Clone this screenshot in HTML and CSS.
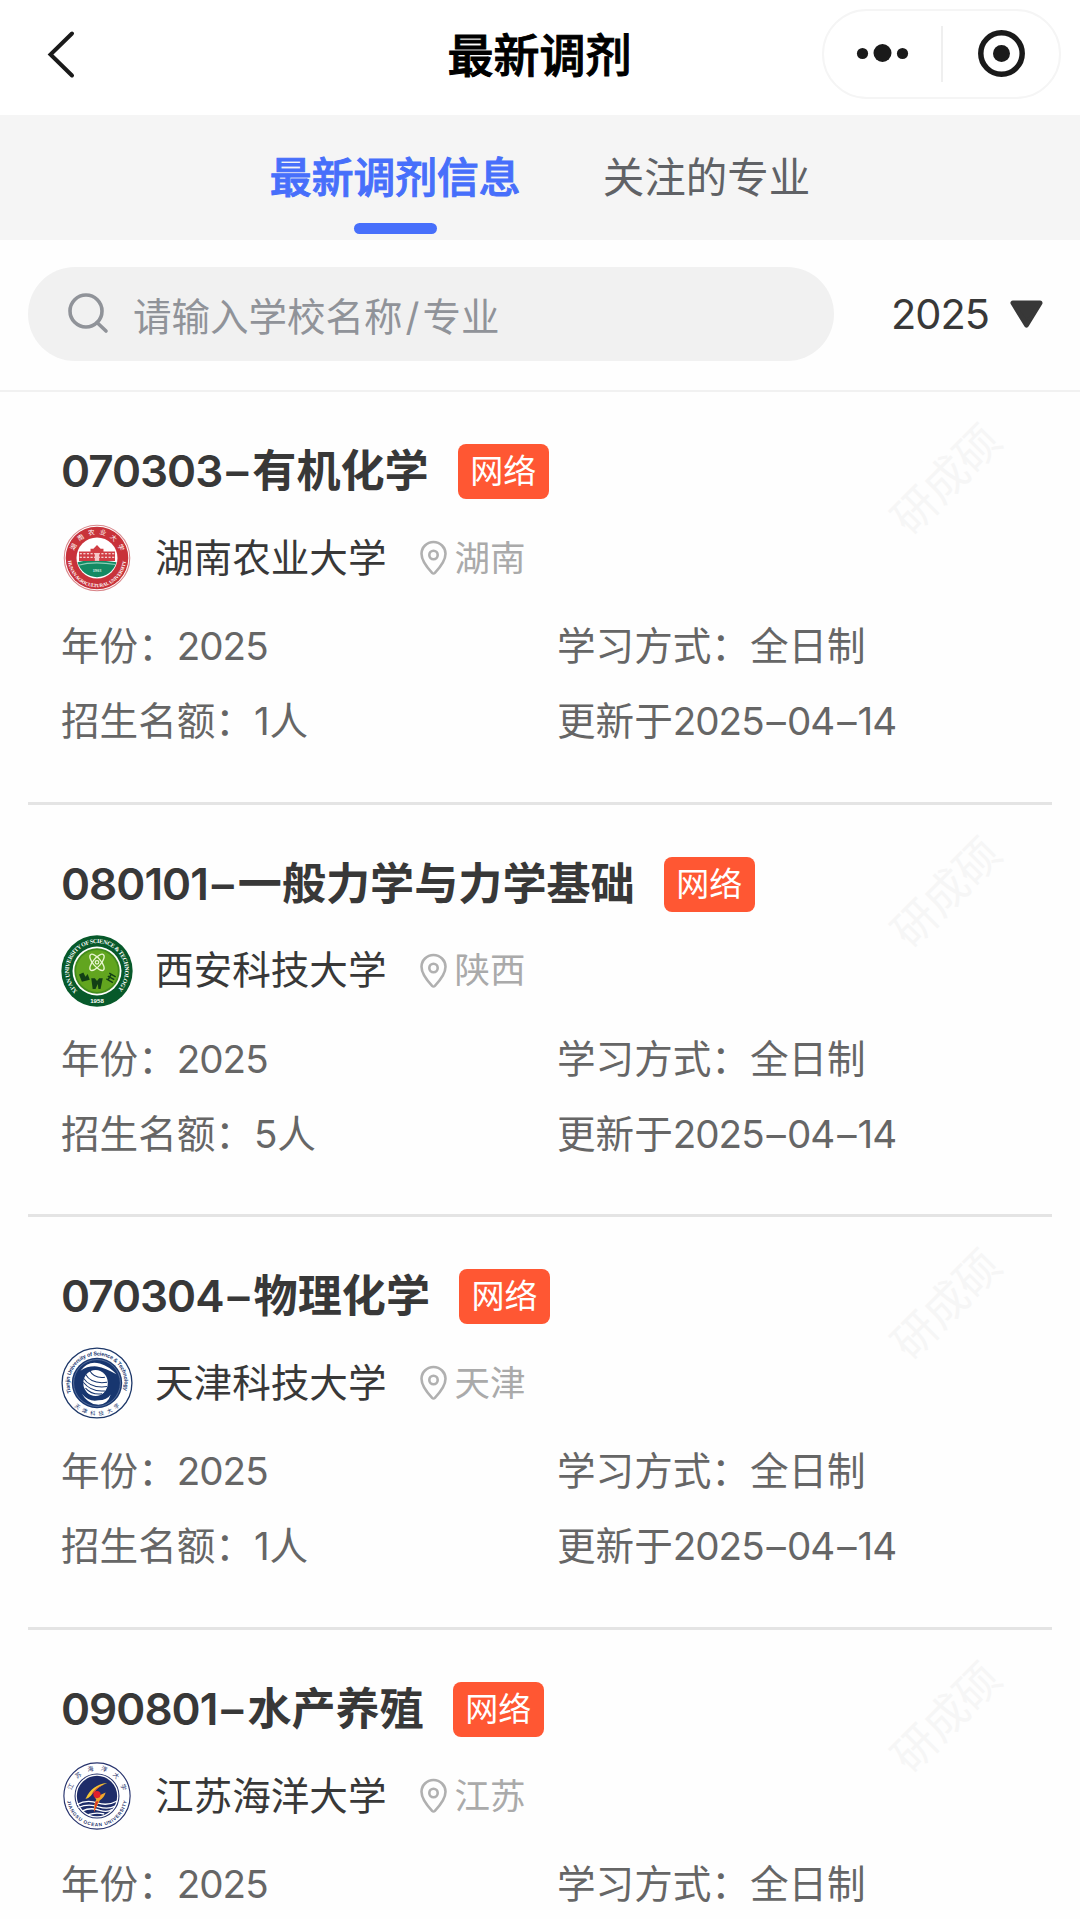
FILE: index.html
```html
<!DOCTYPE html>
<html lang="zh-CN">
<head>
	<meta charset="UTF-8">
	<title>最新调剂</title>
	<link rel="stylesheet" href="styles.css">
</head>
<body>
	<svg width="0" height="0" class="defs">
		<symbol id="pin" viewBox="0 0 28 36">
			<path d="M14 2C7.300 2 2 7.300 2 13.800C2 21 8.500 28.500 12.600 32.800Q14 34.200 15.400 32.800C19.500 28.500 26 21 26 13.800C26 7.300 20.700 2 14 2Z"/>
			<circle cx="14" cy="15" r="4.200"/>
		</symbol>
	</svg>
	<div id="header">
		<svg class="back" width="30" height="50" viewBox="0 0 30 50"><path d="M26 4.500L4.500 25.500L26 46.500"/></svg>
		<h1>最新调剂</h1>
		<div class="capsule">
			<svg width="118" height="86" viewBox="0 0 118 86">
				<circle cx="38.500" cy="42.500" r="5.600"/>
				<circle cx="58.500" cy="42" r="9"/>
				<circle cx="78.500" cy="42.500" r="5.600"/>
			</svg>
			<i></i>
			<svg width="117" height="86" viewBox="0 0 117 86">
				<circle class="ring" cx="59.500" cy="42.500" r="20.700"/>
				<circle cx="59.500" cy="42.500" r="8.500"/>
			</svg>
		</div>
	</div>
	<div id="tabs">
		<span class="tab active">最新调剂信息</span>
		<span class="tab">关注的专业</span>
	</div>
	<div id="search">
		<div class="box">
			<svg width="42" height="42" viewBox="0 0 42 42"><circle cx="19" cy="18" r="16"/><path d="M30 29.500L39 38"/></svg>
			<span>请输入学校名称<b>/</b>专业</span>
		</div>
		<div class="year">
			<span class="n">2025</span>
			<svg width="33" height="28" viewBox="0 0 33 28"><path d="M3 3H30L16.500 25Z"/></svg>
		</div>
	</div>
	<ul id="list">
		<li>
			<div class="title"><h2><span class="n">070303<i>–</i></span>有机化学</h2><span class="tag">网络</span></div>
			<div class="school">
				<svg class="logo" viewBox="0 0 100 100">
					<circle cx="50" cy="50" r="45.500" fill="#fff" stroke="#d9868a" stroke-width="1.500"/>
					<circle cx="50" cy="50" r="43.500" fill="#c8323a"/>
					<circle cx="50" cy="50" r="28.500" fill="#fff"/>
					<path d="M23 56Q40 50 77 56A28 28 0 0 1 23 56Z" fill="#138a63"/>
					<path d="M25 41H41V37H45L50 32L55 37H59V41H75V54H25Z" fill="#d13d44"/>
					<path d="M26 44H74M26 49H74" stroke="#fff" stroke-width="1.500" stroke-dasharray="3 2"/>
					<path d="M47 43H53V54H47Z" fill="#f5c9c9"/>
					<path d="M24 60Q45 54 76 59" stroke="#8ed0b8" stroke-width="1.500" fill="none"/>
					<path id="t1" d="M17 50A33 33 0 0 1 83 50" fill="none"/>
					<path id="b1" d="M9.500 50A40.500 40.500 0 0 0 90.500 50" fill="none"/>
					<text class="kai" font-size="9" fill="#fff" text-anchor="middle" letter-spacing="6"><textPath href="#t1" startOffset="53%">湖南农业大学</textPath></text>
					<text class="en" font-size="6.800" fill="#fff"><textPath href="#b1" startOffset="4" textLength="119">HUNAN AGRICULTURAL UNIVERSITY</textPath></text>
					<text class="en" font-size="6" fill="#d7efe5" x="50" y="69" text-anchor="middle">1903</text>
				</svg>
				<span class="name">湖南农业大学</span>
				<svg class="pin"><use href="#pin"/></svg><span class="city">湖南</span>
			</div>
			<div class="info"><span>年份：<span class="n">2025</span></span><span>学习方式：全日制</span><span>招生名额：1人</span><span>更新于<span class="n">2025<i>–</i>04<i>–</i>14</span></span></div>
			<div class="mark">研成硕</div>
		</li>
		<li>
			<div class="title"><h2><span class="n">080101<i>–</i></span>一般力学与力学基础</h2><span class="tag">网络</span></div>
			<div class="school">
				<svg class="logo" viewBox="0 0 100 100">
					<circle cx="50" cy="50" r="49.500" fill="#07592a"/>
					<circle cx="50" cy="50" r="34" fill="#fff"/>
					<circle cx="50" cy="50" r="31.500" fill="#438c1c"/>
					<circle cx="50" cy="50" r="29" fill="#62a51f"/>
					<g fill="none" stroke="#e8f5d0" stroke-width="1.800">
						<ellipse cx="50" cy="38" rx="14" ry="5.500" transform="rotate(50 50 38)"/>
						<ellipse cx="50" cy="38" rx="14" ry="5.500" transform="rotate(-50 50 38)"/>
						<circle cx="50" cy="38" r="2.500"/>
					</g>
					<path d="M25 55L31 52L34 58L37 54L40 62L29 65ZM42 60H47L50 64L53 60H58L55 75H52L51 68L48 75H44Z" fill="#123f15"/>
					<path d="M63 61L72 66M65 57L74 62M67 53L76 58M65 63L70 54" stroke="#123f15" stroke-width="2"/>
					<path id="t2" d="M23.100 77.900A38.800 38.800 0 1 1 76.900 77.900" fill="none"/>
					<text class="en" font-size="8.300" fill="#fff"><textPath href="#t2" textLength="181">XI'AN UNIVERSITY OF SCIENCE &amp; TECHNOLOGY</textPath></text>
					<text class="num" font-size="8.500" fill="#fff" x="50" y="95" text-anchor="middle">1958</text>
				</svg>
				<span class="name">西安科技大学</span>
				<svg class="pin"><use href="#pin"/></svg><span class="city">陕西</span>
			</div>
			<div class="info"><span>年份：<span class="n">2025</span></span><span>学习方式：全日制</span><span>招生名额：5人</span><span>更新于<span class="n">2025<i>–</i>04<i>–</i>14</span></span></div>
			<div class="mark">研成硕</div>
		</li>
		<li>
			<div class="title"><h2><span class="n">070304<i>–</i></span>物理化学</h2><span class="tag">网络</span></div>
			<div class="school">
				<svg class="logo" viewBox="0 0 100 100">
					<circle cx="50" cy="50" r="48.500" fill="#fff" stroke="#1e3869" stroke-width="1.800"/>
					<circle cx="50" cy="50" r="35" fill="#17366f"/>
					<circle cx="50" cy="50" r="32.500" fill="none" stroke="#6c83ac" stroke-width="1"/>
					<ellipse cx="48" cy="50" rx="17" ry="18" fill="#fff"/>
					<g fill="none" stroke="#17366f" stroke-width="1.400">
						<path d="M34 38Q42 52 64 49M31 43Q41 58 64 55M31 49Q42 63 61 61M34 57Q43 67 57 65M40 33Q46 44 61 42"/>
					</g>
					<path d="M27 33Q38 18 54 23Q67 27 77 38Q62 29 50 27Q37 26 27 33ZM29 65Q39 77 52 74Q64 74 69 66Q65 81 50 80Q37 79 29 65Z" fill="#fff"/>
					<path id="t3" d="M14.300 63.500A38.200 38.200 0 1 1 85.700 63.500" fill="none"/>
					<path id="b3" d="M5 50A45 45 0 0 0 95 50" fill="none"/>
					<text class="hv" font-size="7.600" fill="#17366f"><textPath href="#t3" textLength="144">Tianjin University of Science &amp; Technology</textPath></text>
					<text class="kai" font-size="7.500" fill="#17366f" text-anchor="middle" letter-spacing="5"><textPath href="#b3" startOffset="52%">天津科技大学</textPath></text>
				</svg>
				<span class="name">天津科技大学</span>
				<svg class="pin"><use href="#pin"/></svg><span class="city">天津</span>
			</div>
			<div class="info"><span>年份：<span class="n">2025</span></span><span>学习方式：全日制</span><span>招生名额：1人</span><span>更新于<span class="n">2025<i>–</i>04<i>–</i>14</span></span></div>
			<div class="mark">研成硕</div>
		</li>
		<li>
			<div class="title"><h2><span class="n">090801<i>–</i></span>水产养殖</h2><span class="tag">网络</span></div>
			<div class="school">
				<svg class="logo" viewBox="0 0 100 100">
					<circle cx="50" cy="50" r="46" fill="#fff" stroke="#27336d" stroke-width="1.600"/>
					<circle cx="50" cy="50" r="30.500" fill="#fff" stroke="#27336d" stroke-width="1.500"/>
					<circle cx="50" cy="50" r="28" fill="#1e2c69"/>
					<path d="M22 62Q36 54 51 60Q66 64 78 57M24 66Q38 60 52 65Q66 69 75 64M29 71Q42 65 54 70Q64 73 71 69M38 76Q48 72 60 75" fill="none" stroke="#fff" stroke-width="1.800"/>
					<path d="M64 32Q43 34 34 54Q42 52 45 44Q50 38 64 32Z" fill="#f4c633"/>
					<path d="M60 34Q46 38 42 48L47 44Q50 39 60 34Z" fill="#e8622d"/>
					<path d="M47 52L62 45Q60 52 54 56L46 72Q45 62 49 55Z" fill="#f0a52c"/>
					<path d="M48 58L52 57L46 73Z" fill="#dc3327"/>
					<circle cx="50" cy="48" r="5" fill="#e1202b"/>
					<path id="t4" d="M14.500 50A35.500 35.500 0 0 1 85.500 50" fill="none"/>
					<path id="b4" d="M8 50A42 42 0 0 0 92 50" fill="none"/>
					<text class="kai" font-size="8.500" fill="#27336d" text-anchor="middle" letter-spacing="9"><textPath href="#t4" startOffset="54%">江苏海洋大学</textPath></text>
					<text class="hv" font-size="6.500" fill="#27336d"><textPath href="#b4" startOffset="7" textLength="118">JIANGSU OCEAN UNIVERSITY</textPath></text>
				</svg>
				<span class="name">江苏海洋大学</span>
				<svg class="pin"><use href="#pin"/></svg><span class="city">江苏</span>
			</div>
			<div class="info"><span>年份：<span class="n">2025</span></span><span>学习方式：全日制</span></div>
			<div class="mark">研成硕</div>
		</li>
	</ul>
</body>
</html>
```
FILE: styles.css
```css
*{
	margin: 0;
	padding: 0;
	box-sizing: border-box;
}
body{
	width: 1080px;
	height: 1919px;
	overflow: hidden;
	background: #fefefe;
	font-family: Inter, "Noto Sans CJK SC", sans-serif;
	color: #383838;
}
ul{
	list-style-type: none;
}
svg{
	flex-shrink: 0;
}
.defs{
	display: block;
	height: 0;
}
/* 数字稍微收紧，横线两边留一点空 */
.n{
	letter-spacing: -1px;
}
.n i{
	font-style: normal;
	margin: 0 2px 0 3px;
}
#header{
	height: 115px;
	display: grid;
	grid-template-columns: 1fr auto 1fr;
	align-items: center;
	padding: 0 19px 8px 46px;
	background: #fff;
}
#header h1{
	font-size: 46px;
	font-weight: 500;
	line-height: 60px;
	color: #000;
	padding: 2px 28px 0 0;
	-webkit-text-stroke: 1px #000;
}
.back{
	fill: none;
	stroke: #1a1a1a;
	stroke-width: 4;
	stroke-linecap: round;
}
.capsule{
	justify-self: end;
	display: flex;
	align-items: center;
	width: 239px;
	height: 90px;
	border: 2px solid #f5f5f5;
	border-radius: 45px;
	fill: #1a1a1a;
}
.capsule i{
	flex-shrink: 0;
	width: 2px;
	height: 56px;
	margin: 0 -1px;
	background: #efefef;
}
.ring{
	fill: none;
	stroke: #1a1a1a;
	stroke-width: 5.500;
}
#tabs{
	height: 125px;
	display: flex;
	justify-content: center;
	gap: 82px;
	background: #f5f5f5;
}
.tab{
	display: flex;
	flex-direction: column;
	align-items: center;
	padding-top: 33px;
	font-size: 41.500px;
	line-height: 60px;
	color: #606266;
}
.active{
	font-size: 41.800px;
	font-weight: 500;
	color: #476ffb;
	-webkit-text-stroke: 1px #476ffb;
}
.active::after{
	content: "";
	width: 83px;
	height: 11px;
	margin-top: 15px;
	border-radius: 6px;
	background: #476ffb;
}
#search{
	height: 152px;
	display: flex;
	align-items: center;
	padding: 0 37px 2px 28px;
	border-bottom: 2px solid #f1f1f1;
}
#search .box{
	width: 806px;
	height: 94px;
	display: flex;
	align-items: center;
	gap: 24px;
	padding-left: 39px;
	border-radius: 47px;
	background: #f1f1f1;
	font-size: 38.500px;
	color: #909399;
}
#search .box svg{
	fill: none;
	stroke: #909399;
	stroke-width: 3.600;
	stroke-linecap: round;
}
#search b{
	font-weight: 400;
	margin: 0 3px;
}
.year{
	flex: 1;
	display: flex;
	align-items: center;
	justify-content: flex-end;
	gap: 21px;
	font-size: 41.500px;
}
.year path{
	fill: #383838;
	stroke: #383838;
	stroke-width: 5;
	stroke-linejoin: round;
}
#list li{
	position: relative;
	height: 412.700px;
	margin: 0 28px;
	padding: 52px 0 0 33px;
	border-bottom: 3px solid #e4e4e4;
}
.title{
	display: flex;
	align-items: center;
	height: 55px;
}
.title h2{
	font-size: 44.100px;
	font-weight: 600;
	line-height: 55px;
	white-space: nowrap;
}
.title .n i{
	margin: 0 5px 0 4px;
}
.tag{
	width: 91px;
	height: 55px;
	margin-left: 29px;
	border-radius: 8px;
	background: #ff5733;
	color: #fff;
	font-size: 33px;
	line-height: 55px;
	text-align: center;
}
.school{
	display: flex;
	align-items: center;
	height: 72px;
	margin-top: 23px;
}
.logo{
	width: 72px;
	height: 72px;
}
.name{
	margin: 0 33px 0 22px;
	padding-bottom: 7px;
	font-size: 38.600px;
}
.pin{
	width: 29px;
	height: 36px;
	margin-right: 6px;
	fill: none;
	stroke: #b0b0b0;
	stroke-width: 2.600;
}
.city{
	padding-bottom: 6px;
	font-size: 35.500px;
	color: #aaa;
}
.info{
	display: grid;
	grid-template-columns: 496px 1fr;
	margin-top: 15px;
	font-size: 38.600px;
	line-height: 75px;
	color: #666;
}
.mark{
	position: absolute;
	top: 57px;
	right: 40px;
	width: 132px;
	font-size: 44px;
	line-height: 60px;
	text-align: center;
	color: #f6f6f6;
	transform: rotate(-45deg);
}
.kai{
	font-family: "Noto Sans CJK SC", sans-serif;
}
.en{
	font-family: "Liberation Serif", serif;
	font-weight: bold;
}
.hv, .num{
	font-family: "Liberation Sans", sans-serif;
	font-weight: bold;
}
```
